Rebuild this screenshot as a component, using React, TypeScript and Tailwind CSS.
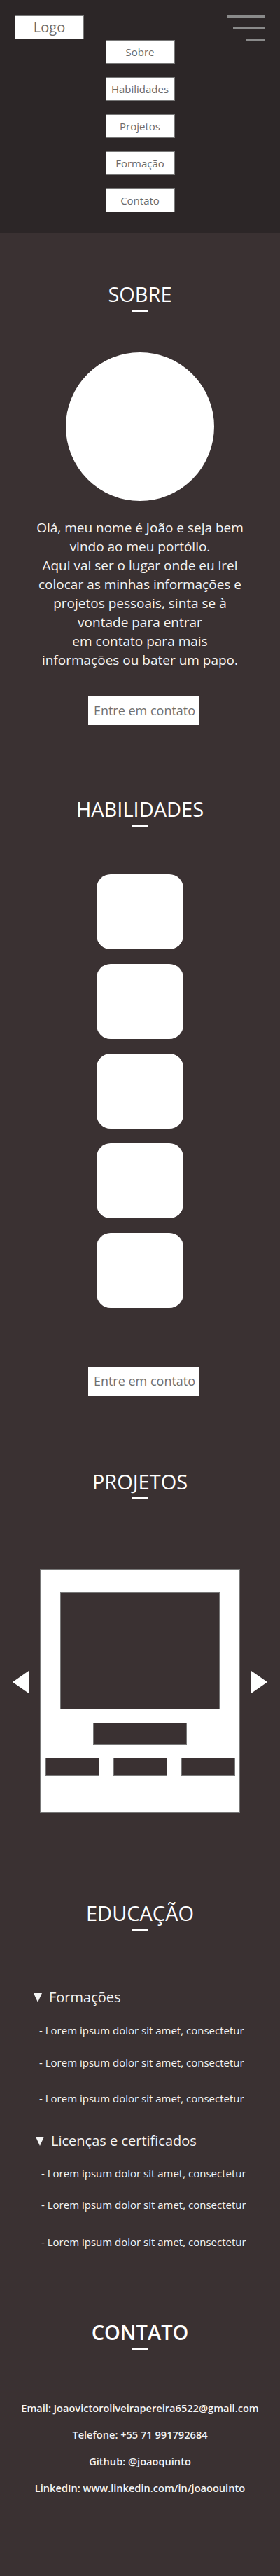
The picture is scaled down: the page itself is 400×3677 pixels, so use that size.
import React from 'react';

const font = { fontFamily: '"Open Sans", "Noto Sans", sans-serif' };

const navItems = ['Sobre', 'Habilidades', 'Projetos', 'Formação', 'Contato'];

const Title = ({ children, className = '' }: { children: React.ReactNode; className?: string }) => (
  <div className={`flex flex-col items-center ${className}`}>
    <h2 className="text-[29px] leading-[40px] text-white">{children}</h2>
    <span className="mt-[2px] block h-[3px] w-[24px] bg-white" />
  </div>
);

const ContactButton = ({ className = '' }: { className?: string }) => (
  <button className={`ml-[11px] flex h-[41px] w-[159px] shrink-0 items-center justify-center overflow-hidden whitespace-nowrap bg-white pl-[2px] text-[18px] text-[#707070] ${className}`}>
    Entre em contato
  </button>
);

const Arrow = ({ dir }: { dir: 'left' | 'right' }) => (
  <svg width="23" height="32" viewBox="0 0 23 32" className="mt-[145px] shrink-0">
    {dir === 'left' ? (
      <polygon points="23,0 23,32 0,16" fill="#ffffff" />
    ) : (
      <polygon points="0,0 0,32 23,16" fill="#ffffff" />
    )}
  </svg>
);

const Caret = () => (
  <svg width="12" height="13" viewBox="0 0 12 13" className="shrink-0">
    <polygon points="0,0 12,0 6,13" fill="#f4f4f4" />
  </svg>
);

const lorem = '- Lorem ipsum dolor sit amet, consectetur';

export default function App() {
  return (
    <div style={font} className="w-[400px] bg-[#3a3132]">
      <header className="h-[332px] bg-[#2c2627] pt-[22px]">
        <div className="flex items-start justify-between pl-[21px] pr-[22px]">
          <div className="flex h-[34px] w-[99px] items-center justify-center border border-[#777] bg-white text-[20px] text-[#6b6b6b]">
            Logo
          </div>
          <div className="flex flex-col items-end gap-[14px]">
            <span className="block h-[3px] w-[54px] bg-[#8a8a8a]" />
            <span className="block h-[3px] w-[45px] bg-[#8a8a8a]" />
            <span className="block h-[3px] w-[27px] bg-[#8a8a8a]" />
          </div>
        </div>
        <nav className="mt-[-2px] flex flex-col items-center gap-[19px]">
          {navItems.map((item) => (
            <a
              key={item}
              className="flex h-[34px] w-[99px] items-center justify-center border border-[#777] bg-white text-[15px] text-[#6b6b6b]"
            >
              {item}
            </a>
          ))}
        </nav>
      </header>

      <main className="flex flex-col items-center pt-[68px] pb-[111px]">
        {/* sobre */}
        <Title>SOBRE</Title>
        <div className="mt-[58px] h-[212px] w-[212px] rounded-full bg-white" />
        <p className="mt-[25px] text-center text-[19px] leading-[27px] text-[#f4f4f4]">
          Olá, meu nome é João e seja bem
          <br />
          vindo ao meu portólio.
          <br />
          Aqui vai ser o lugar onde eu irei
          <br />
          colocar as minhas informações e
          <br />
          projetos pessoais, sinta se à
          <br />
          vontade para entrar
          <br />
          em contato para mais
          <br />
          informações ou bater um papo.
        </p>
        <ContactButton className="mt-[38px]" />

        {/* habilidades */}
        <Title className="mt-[100px]">HABILIDADES</Title>
        <div className="mt-[68px] flex flex-col gap-[21px]">
          {[1, 2, 3, 4, 5].map((n) => (
            <div key={n} className="h-[107px] w-[124px] rounded-[20px] bg-white" />
          ))}
        </div>
        <ContactButton className="mt-[84px]" />

        {/* projetos */}
        <Title className="mt-[103px]">PROJETOS</Title>
        <div className="mt-[100px] flex w-full items-start justify-between px-[18px]">
          <Arrow dir="left" />
          <div className="flex h-[348px] w-[286px] flex-col items-center border border-[#777] bg-white pt-[32px]">
            <div className="h-[167px] w-[228px] border border-[#777] bg-[#3a3132]" />
            <div className="mt-[19px] h-[32px] w-[134px] border border-[#777] bg-[#3a3132]" />
            <div className="mt-[18px] flex gap-[20px]">
              <div className="h-[26px] w-[77px] border border-[#777] bg-[#3a3132]" />
              <div className="h-[26px] w-[77px] border border-[#777] bg-[#3a3132]" />
              <div className="h-[26px] w-[77px] border border-[#777] bg-[#3a3132]" />
            </div>
          </div>
          <Arrow dir="right" />
        </div>

        {/* educação */}
        <Title className="mt-[123px]">EDUCAÇÃO</Title>
        <div className="mt-[81px] w-full pl-[48px] text-[#f4f4f4]">
          <div className="flex items-center gap-[10px] text-[20px] leading-[28px]">
            <Caret />
            <span>Formações</span>
          </div>
          <ul className="pl-[8px] text-[15px] leading-[24px]">
            <li className="mt-[21px]">{lorem}</li>
            <li className="mt-[22px]">{lorem}</li>
            <li className="mt-[27px]">{lorem}</li>
          </ul>
          <div className="ml-[3px] mt-[35px] flex items-center gap-[10px] text-[20px] leading-[28px]">
            <Caret />
            <span>Licenças e certificados</span>
          </div>
          <ul className="pl-[11px] text-[15px] leading-[24px]">
            <li className="mt-[20px]">{lorem}</li>
            <li className="mt-[21px]">{lorem}</li>
            <li className="mt-[29px]">{lorem}</li>
          </ul>
        </div>

        {/* contato */}
        <Title className="mt-[97px]">
          <span className="font-semibold">CONTATO</span>
        </Title>
        <div className="mt-[64px] flex flex-col items-center text-[14.6px] font-semibold leading-[38px] text-[#f4f4f4]">
          <p>Email: Joaovictoroliveirapereira6522@gmail.com</p>
          <p>Telefone: +55 71 991792684</p>
          <p>Github: @joaoquinto</p>
          <p>LinkedIn: www.linkedin.com/in/joaoouinto</p>
        </div>
      </main>
    </div>
  );
}
